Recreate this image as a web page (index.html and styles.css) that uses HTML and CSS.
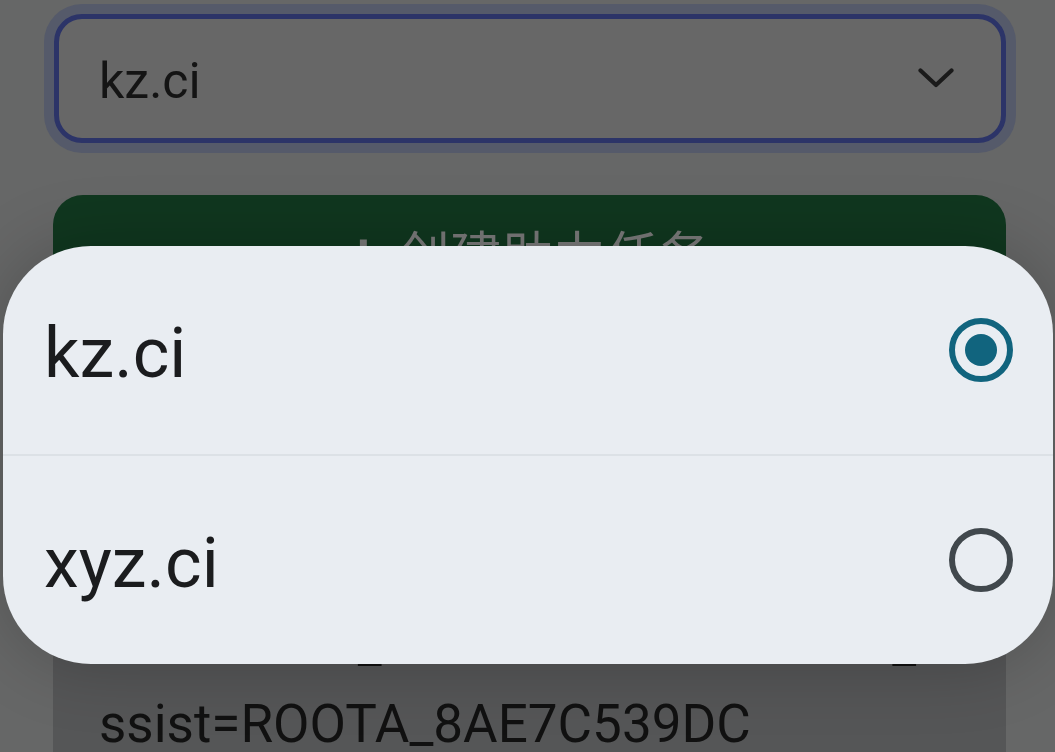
FILE: index.html
```html
<!DOCTYPE html>
<html lang="zh-CN">
<head>
<meta charset="utf-8">
<title>创建助力任务</title>
<link rel="stylesheet" href="styles.css">
</head>
<body>
<main class="page">
  <div class="select">
    <span class="select-value">kz.ci</span>
    <svg class="chevron" viewBox="0 0 36 20" width="36" height="20" aria-hidden="true">
      <path d="M2.5 2.5 L18 17 L33.5 2.5" fill="none" stroke="#1a1a1a" stroke-width="4.2" stroke-linecap="round" stroke-linejoin="round"/>
    </svg>
  </div>

  <button class="create-btn" type="button"><span class="plus">+</span>创建助力任务</button>

  <section class="card">
    <div class="card-line">助力链接</div>
    <div class="card-line">有效期 7 天</div>
    <div class="card-line">复制后发送给好友</div>
    <div class="card-link">rid=ROOTA_8AE7C539DC&amp;source_assist=ROOTA_8AE7C539DC</div>
  </section>
</main>

<div class="sheet" role="listbox">
  <div class="option" role="option" aria-selected="true">
    <span class="option-label">kz.ci</span>
    <span class="radio radio-on"><span class="radio-dot"></span></span>
  </div>
  <div class="divider"></div>
  <div class="option" role="option" aria-selected="false">
    <span class="option-label">xyz.ci</span>
    <span class="radio"></span>
  </div>
</div>
</body>
</html>
```

FILE: styles.css
```css
* { box-sizing: border-box; }

html, body {
  margin: 0;
  height: 100%;
  overflow: hidden;
}

body {
  background: #666767;
  font-family: Roboto, "Noto Sans CJK SC", sans-serif;
  color: #141414;
}

.page {
  padding: 14px 49px 0 53px;
  display: flex;
  flex-direction: column;
}

.select {
  margin-left: 1px;
  height: 129px;
  border: 5px solid #2c3468;
  border-radius: 28px;
  box-shadow: 0 0 0 10px #555a6a;
  background: #676767;
  display: flex;
  align-items: center;
  justify-content: space-between;
  padding: 4px 47px 0 40px;
}

.select-value {
  font-size: 50px;
  color: #141414;
  line-height: 1;
}

.chevron {
  display: block;
  margin-top: -6px;
}

.create-btn {
  margin-top: 52px;
  height: 114px;
  border: 0;
  border-radius: 30px;
  background: #10371f;
  color: #7a7a7a;
  font-family: "Noto Sans CJK SC", sans-serif;
  font-size: 52px;
  display: flex;
  align-items: center;
  justify-content: center;
  padding: 0;
}

.plus {
  font-family: Roboto, sans-serif;
  font-weight: 700;
  margin-right: 20px;
}

.card {
  margin-top: 40px;
  background: #555657;
  border-radius: 30px;
  padding: 21px 46px 40px 46px;
  font-size: 53px;
  line-height: 80px;
  color: #111;
}

.card-line {
  height: 78px;
  line-height: 78px;
  overflow: hidden;
}

.card-link {
  word-break: break-all;
}

.sheet {
  position: fixed;
  left: 3px;
  right: 2px;
  top: 246px;
  height: 418px;
  background: #e9edf2;
  border-radius: 88px;
  box-shadow: 0 0 70px rgba(0, 0, 0, 0.22);
  display: flex;
  flex-direction: column;
  overflow: hidden;
}

.option {
  height: 208px;
  display: flex;
  align-items: center;
  justify-content: space-between;
  padding: 0 40px 0 41px;
}

.option-label {
  font-size: 70px;
  color: #1b1c1e;
  padding-top: 6px;
}

.divider {
  height: 2px;
  background: #dce1e6;
}

.radio {
  width: 64px;
  height: 64px;
  border-radius: 50%;
  border: 6px solid #41484d;
  display: flex;
  align-items: center;
  justify-content: center;
}

.radio-on {
  border-color: #11647e;
}

.radio-dot {
  width: 32px;
  height: 32px;
  border-radius: 50%;
  background: #11647e;
}
```
